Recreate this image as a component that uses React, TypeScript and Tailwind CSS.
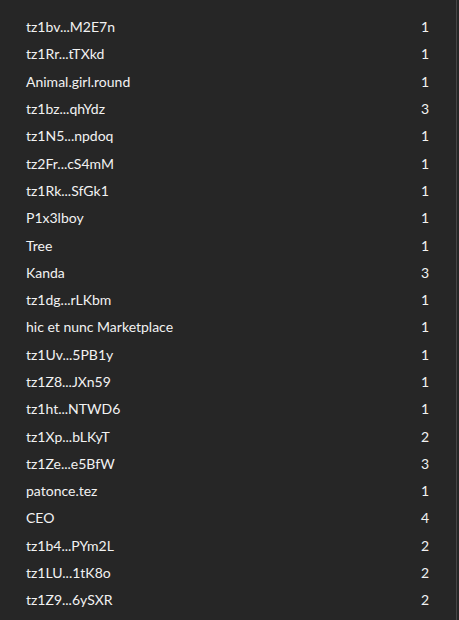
const rows: [string, number][] = [
  ["tz1bv...M2E7n", 1],
  ["tz1Rr...tTXkd", 1],
  ["Animal.girl.round", 1],
  ["tz1bz...qhYdz", 3],
  ["tz1N5...npdoq", 1],
  ["tz2Fr...cS4mM", 1],
  ["tz1Rk...SfGk1", 1],
  ["P1x3lboy", 1],
  ["Tree", 1],
  ["Kanda", 3],
  ["tz1dg...rLKbm", 1],
  ["hic et nunc Marketplace", 1],
  ["tz1Uv...5PB1y", 1],
  ["tz1Z8...JXn59", 1],
  ["tz1ht...NTWD6", 1],
  ["tz1Xp...bLKyT", 2],
  ["tz1Ze...e5BfW", 3],
  ["patonce.tez", 1],
  ["CEO", 4],
  ["tz1b4...PYm2L", 2],
  ["tz1LU...1tK8o", 2],
  ["tz1Z9...6ySXR", 2],
];

export default function App() {
  return (
    <div className="w-[459px] h-[620px] bg-[#262626] flex overflow-hidden font-['Lato',sans-serif]">
      <div className="flex-1 pt-[13px] pl-[26px] pr-[27px]">
        {rows.map(([name, count], i) => (
          <div
            key={i}
            className="h-[27.3px] flex items-center justify-between text-[14px] text-[#f2f2f2]"
          >
            <span>{name}</span>
            <span>{count}</span>
          </div>
        ))}
      </div>
      <div className="w-px bg-[#464646]" />
      <div className="w-[2px]" />
    </div>
  );
}
